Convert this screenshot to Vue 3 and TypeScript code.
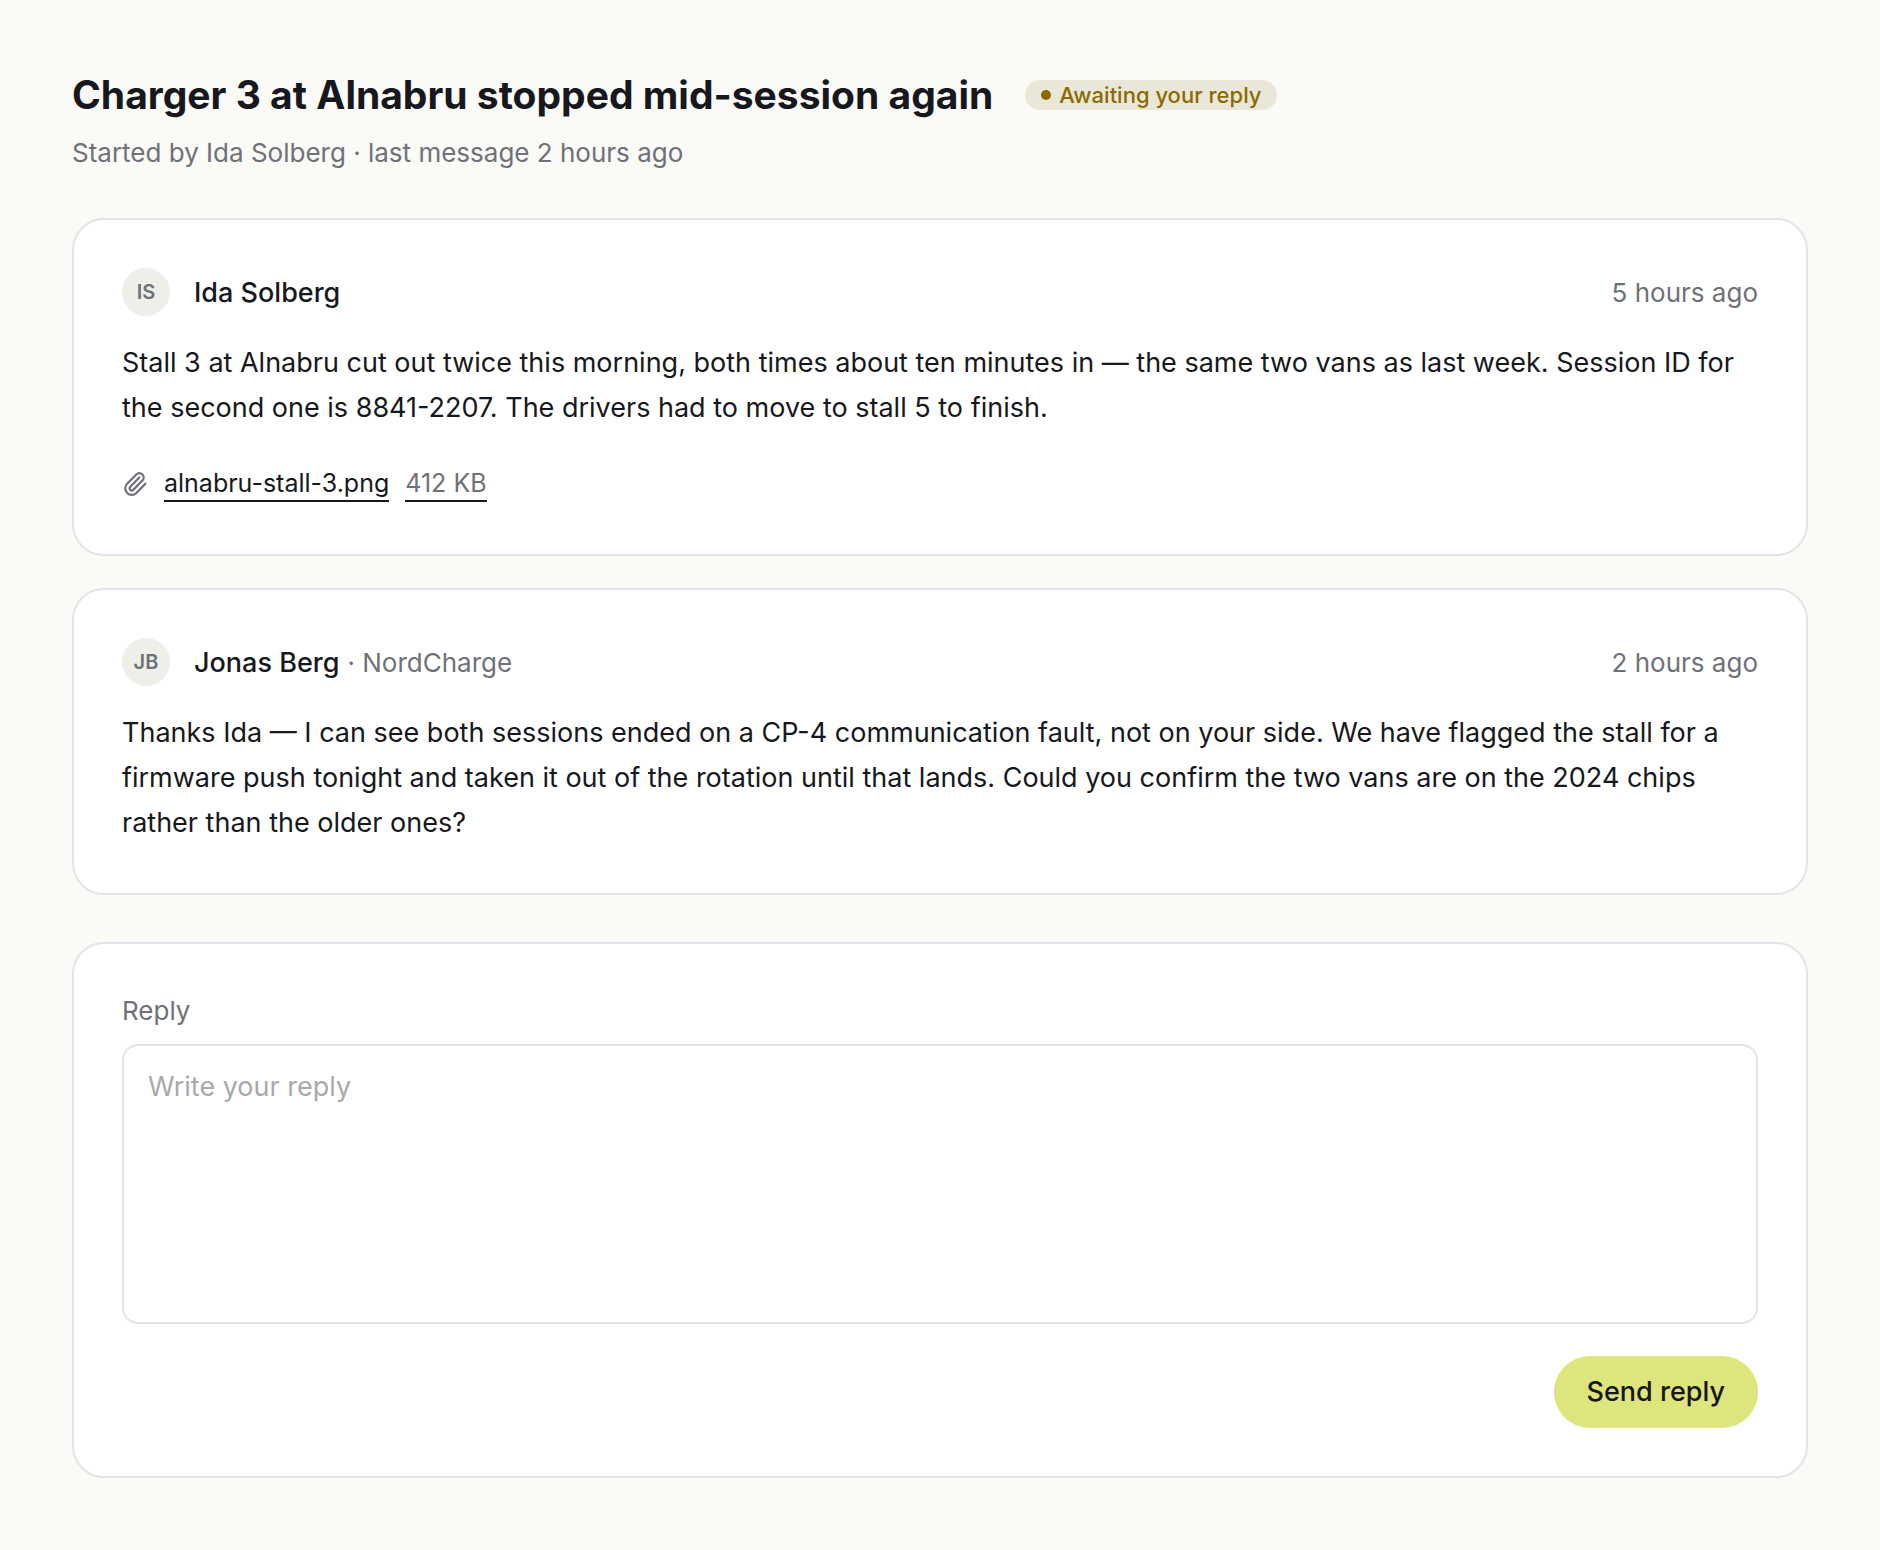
<script setup lang="ts">
import { ref } from 'vue'

interface Attachment {
  name: string
  size: string
}

interface Message {
  id: number
  initials: string
  author: string
  org?: string
  time: string
  body: string
  attachment?: Attachment
}

const messages: Message[] = [
  {
    id: 1,
    initials: 'IS',
    author: 'Ida Solberg',
    time: '5 hours ago',
    body: 'Stall 3 at Alnabru cut out twice this morning, both times about ten minutes in — the same two vans as last week. Session ID for the second one is 8841-2207. The drivers had to move to stall 5 to finish.',
    attachment: { name: 'alnabru-stall-3.png', size: '412 KB' },
  },
  {
    id: 2,
    initials: 'JB',
    author: 'Jonas Berg',
    org: 'NordCharge',
    time: '2 hours ago',
    body: 'Thanks Ida — I can see both sessions ended on a CP-4 communication fault, not on your side. We have flagged the stall for a firmware push tonight and taken it out of the rotation until that lands. Could you confirm the two vans are on the 2024 chips rather than the older ones?',
  },
]

const draft = ref('')

function sendReply() {
  draft.value = ''
}
</script>

<template>
  <main class="page">
    <header class="thread-header">
      <div class="title-row">
        <h1 class="title">Charger 3 at Alnabru stopped mid-session again</h1>
        <span class="badge"><span class="dot" aria-hidden="true"></span>Awaiting your reply</span>
      </div>
      <p class="subtitle">Started by Ida Solberg · last message 2 hours ago</p>
    </header>

    <section class="messages">
      <article v-for="message in messages" :key="message.id" class="card">
        <div class="message-head">
          <span class="avatar" aria-hidden="true">{{ message.initials }}</span>
          <span class="byline">
            <span class="author">{{ message.author }}</span>
            <span v-if="message.org" class="org">· {{ message.org }}</span>
          </span>
          <time class="time">{{ message.time }}</time>
        </div>
        <p class="body">{{ message.body }}</p>
        <a v-if="message.attachment" class="attachment" href="#">
          <svg class="clip" viewBox="0 0 24 24" aria-hidden="true">
            <path d="m16 6-8.414 8.586a2 2 0 0 0 2.829 2.829l8.414-8.586a4 4 0 1 0-5.657-5.657l-8.379 8.551a6 6 0 1 0 8.485 8.485l8.379-8.551" />
          </svg>
          <span class="file-name">{{ message.attachment.name }}</span>
          <span class="file-size">{{ message.attachment.size }}</span>
        </a>
      </article>
    </section>

    <form class="card reply" @submit.prevent="sendReply">
      <label class="label" for="reply">Reply</label>
      <textarea id="reply" v-model="draft" class="field" placeholder="Write your reply"></textarea>
      <button class="send" type="submit">Send reply</button>
    </form>
  </main>
</template>

<style>
body {
  margin: 0;
  background: #fafaf6;
}
</style>

<style scoped>
.page {
  padding: 72px;
  font-family: Inter, "Liberation Sans", sans-serif;
  font-size: 27px;
  line-height: 45px;
  color: #16181d;
}

.thread-header {
  margin-bottom: 46px;
}

.title-row {
  display: flex;
  align-items: center;
  gap: 32px;
}

.title {
  margin: 0;
  font-size: 39px;
  line-height: 46px;
  font-weight: 700;
}

.badge {
  display: inline-flex;
  align-items: center;
  gap: 8px;
  padding: 0 16px;
  border-radius: 15px;
  background: #ebe7d8;
  color: #8a6a00;
  font-size: 22px;
  line-height: 30px;
  font-weight: 500;
  white-space: nowrap;
}

.dot {
  width: 10px;
  height: 10px;
  border-radius: 50%;
  background: currentColor;
}

.subtitle {
  margin: 16px 0 0;
  font-size: 26px;
  line-height: 38px;
  color: #6f7178;
}

.messages {
  display: flex;
  flex-direction: column;
  gap: 32px;
  margin-bottom: 47px;
}

.card {
  padding: 48px;
  border: 2px solid #e4e4e8;
  border-radius: 32px;
  background: #ffffff;
}

.message-head {
  display: flex;
  align-items: center;
  gap: 24px;
  margin-bottom: 24px;
}

.avatar {
  display: flex;
  align-items: center;
  justify-content: center;
  width: 48px;
  height: 48px;
  border-radius: 50%;
  background: #eeefe9;
  color: #6f7178;
  font-size: 20px;
  font-weight: 600;
}

.byline {
  display: flex;
  flex: 1;
  align-items: baseline;
  gap: 8px;
}

.author {
  font-weight: 500;
}

.org,
.time,
.label {
  font-size: 26px;
  color: #6f7178;
}

.body {
  margin: 0;
}

.attachment {
  display: flex;
  align-items: center;
  gap: 16px;
  width: fit-content;
  min-height: 44px;
  margin-top: 32px;
  font-size: 25px;
  line-height: 34px;
  color: inherit;
  text-decoration: none;
}

.clip {
  width: 26px;
  height: 26px;
  fill: none;
  stroke: #6f7178;
  stroke-width: 2;
  stroke-linecap: round;
  stroke-linejoin: round;
}

.file-name,
.file-size {
  border-bottom: 2px solid #16181d;
}

.file-size {
  color: #6f7178;
}

.reply {
  display: flex;
  flex-direction: column;
}

.label {
  line-height: 38px;
  margin-bottom: 14px;
}

.field {
  box-sizing: border-box;
  width: 100%;
  height: 280px;
  padding: 18px 24px;
  border: 2px solid #e4e4e8;
  border-radius: 16px;
  background: #ffffff;
  color: inherit;
  font: inherit;
  resize: none;
}

.field::placeholder {
  color: #a9a9ab;
}

.send {
  align-self: flex-end;
  margin-top: 32px;
  padding: 0 33px;
  border: 0;
  border-radius: 36px;
  background: #dde57c;
  color: inherit;
  font: inherit;
  font-weight: 500;
  line-height: 72px;
  cursor: pointer;
}
</style>
